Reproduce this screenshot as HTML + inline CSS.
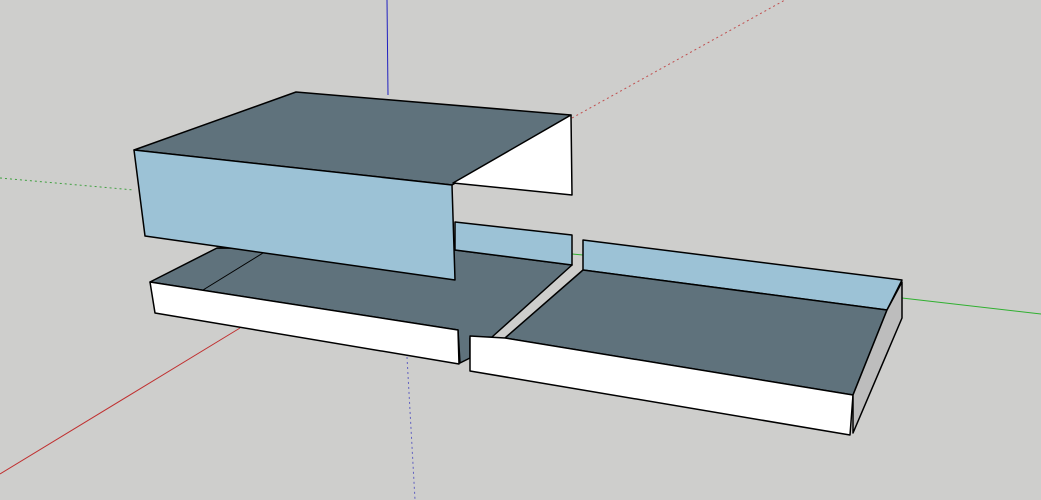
<!DOCTYPE html>
<html><head><style>html,body{margin:0;padding:0;background:#cececc;}svg{display:block}</style></head>
<body>
<svg width="1041" height="500" viewBox="0 0 1041 500" xmlns="http://www.w3.org/2000/svg">
<rect width="1041" height="500" fill="#cececc"/>
<!-- axes -->
<line x1="0" y1="474" x2="240" y2="328" stroke="#c03030" stroke-width="1"/>
<line x1="572" y1="118" x2="785" y2="0" stroke="#c05050" stroke-width="1" stroke-dasharray="2,3"/>
<line x1="387" y1="0" x2="388" y2="95" stroke="#2020c0" stroke-width="1"/>
<line x1="407" y1="357" x2="415" y2="500" stroke="#6060c0" stroke-width="1" stroke-dasharray="2,3"/>
<line x1="0" y1="178" x2="134" y2="190" stroke="#40a040" stroke-width="1" stroke-dasharray="2,3"/>
<line x1="902" y1="298" x2="1041" y2="314" stroke="#30b030" stroke-width="1"/>
<line x1="572" y1="254" x2="583" y2="255" stroke="#30b030" stroke-width="1"/>
<g stroke="#000" stroke-width="1.5" stroke-linejoin="round">
<!-- left tray -->
<polygon points="150,282 217,248 455,250 572,265 492,337 470,338 470,358 460,363 458,330" fill="#5f727c"/>
<polygon points="455,222 572,235 572,265 455,250" fill="#9cc2d6"/>
<polygon points="150,282 458,330 459,364 155,313" fill="#ffffff"/>
<line x1="203" y1="290" x2="263" y2="253" stroke-width="1"/>
<!-- right tray -->
<polygon points="583,240 902,280 887,310 583,270" fill="#9cc2d6"/>
<polygon points="583,270 887,310 853,395 505,338" fill="#5f727c"/>
<polygon points="470,336 505,338 853,395 850,435 470,371" fill="#ffffff"/>
<polygon points="887,310 902,282 902,318 853,433 853,395" fill="#bdbdbd"/>
<!-- top box -->
<polygon points="134,150 296,92 571,115 452,185" fill="#5f727c"/>
<polygon points="134,150 452,185 455,280 145,236" fill="#9cc2d6"/>
<polygon points="453,183 571,115 572,195" fill="#ffffff"/>
</g>
</svg>
</body></html>
